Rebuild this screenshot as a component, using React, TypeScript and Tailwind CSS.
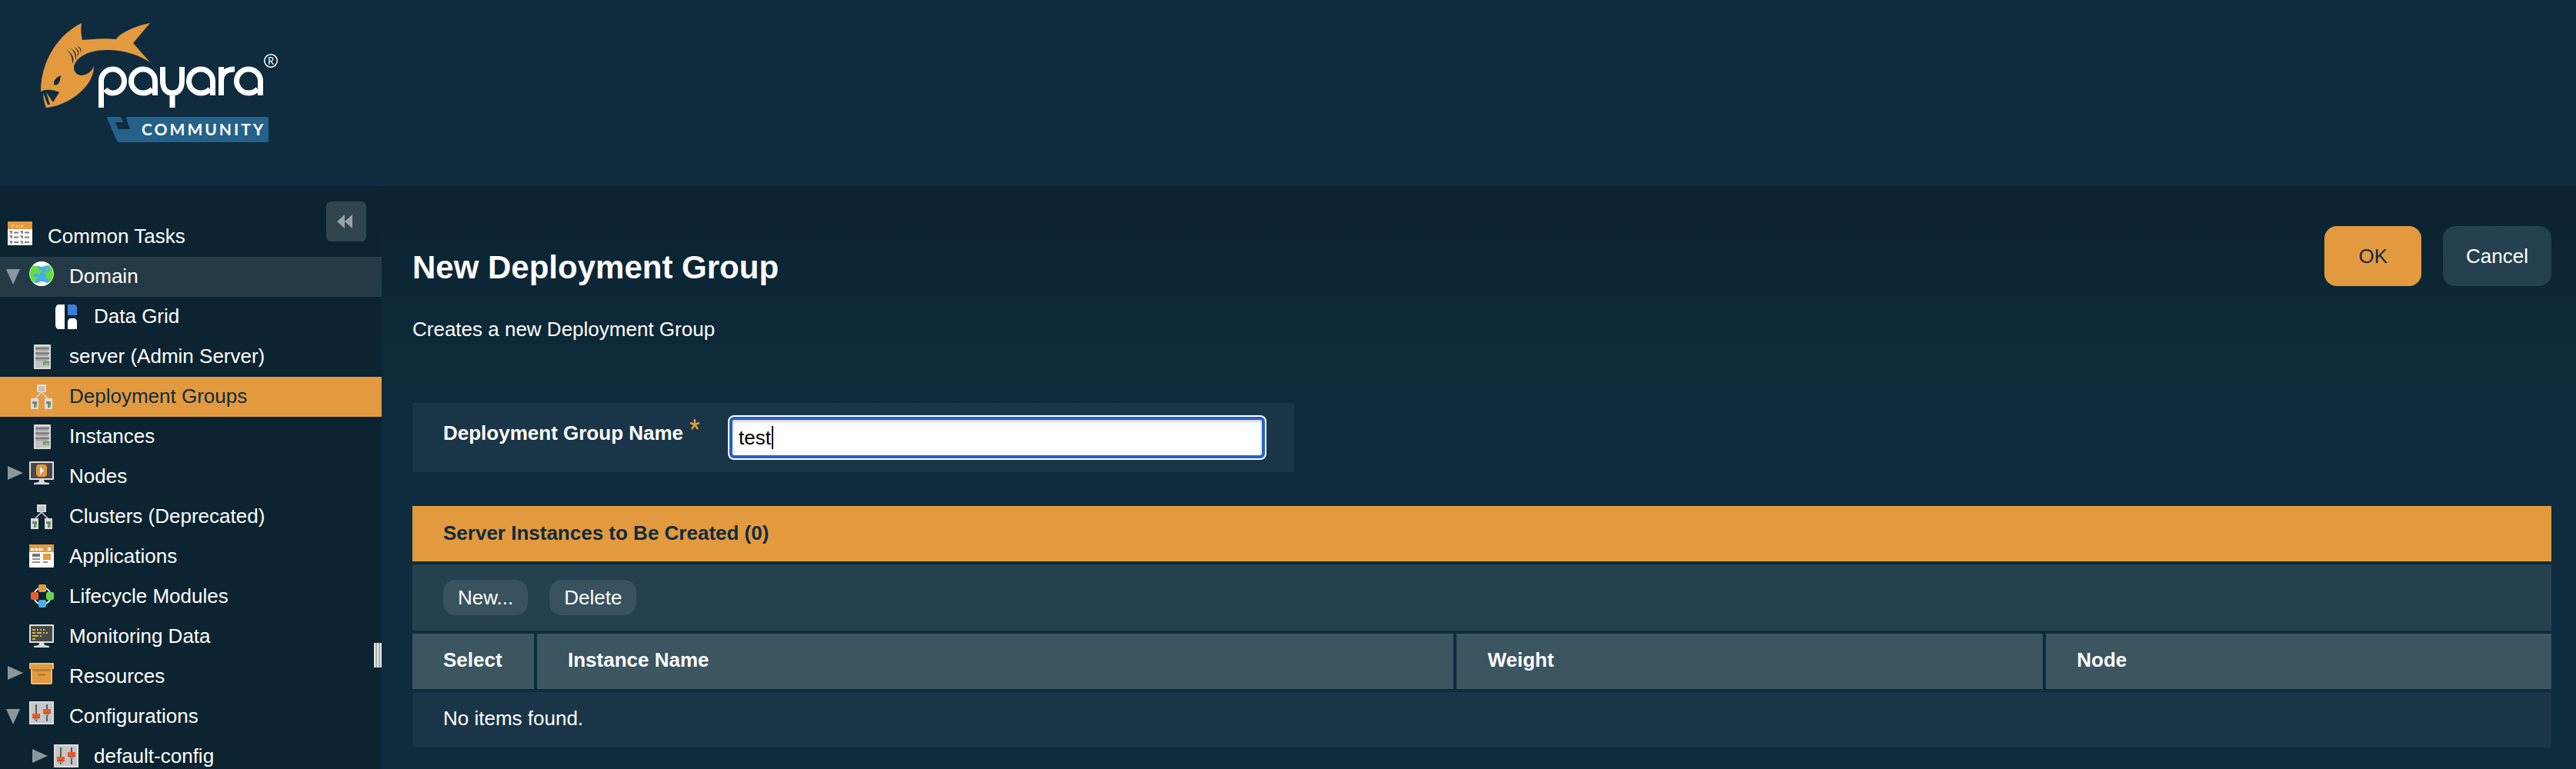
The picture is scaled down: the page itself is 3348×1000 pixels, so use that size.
import { useState, type ReactNode } from "react";

const GRAY = "#8a979e";

function TasksIcon() {
  return (
    <svg width="32" height="32" viewBox="0 0 32 32" aria-hidden="true">
      <rect width="32" height="31" rx="2" fill="#fff" />
      <path d="M2 0H30Q32 0 32 2V10H0V2Q0 0 2 0Z" fill="#e39a3f" />
      <path d="M6 8V5H9M12 8V5M15 5V7M18 5H20M19 5L18 8" stroke="#f1cb9c" strokeWidth="1.500" fill="none" />
      <path d="M2 12H6V16H4ZM16 12H20V16H18ZM2 18H6V22H4ZM16 18H20V22H18ZM2 25H6V29H4ZM16 25H20V29H18Z" fill="#8d8d8d" />
      <path d="M8 14.500H14M22 14.500H28M8 20.500H14M22 20.500H28M8 27H14M22 27H28" stroke="#7b7b7b" strokeWidth="2" />
      <path d="M0 30.500H32" stroke="#d5d5d5" />
    </svg>
  );
}

function GlobeIcon() {
  return (
    <svg width="32" height="32" viewBox="0 0 32 32" aria-hidden="true">
      <clipPath id="globe"><circle cx="16" cy="16" r="16" /></clipPath>
      <g clipPath="url(#globe)">
        <rect width="32" height="32" fill="#66dd3f" />
        <path d="M7 4H26L25 8L21 12L20 15L22 17V21L25 24L26 28H6L10 22L13 20H6L4 18L10 15L13 17L16 12L12 9Z" fill="#4aaee2" />
        <circle cx="23" cy="10" r="2.500" fill="#66dd3f" stroke="#4aaee2" strokeWidth="2" />
        <path d="M5 5L8 0H24L27 5L23 5L20 6L16 7L12 6L8 6ZM5 27L8 32H25L27 27L23 28L18 26H14L10 28Z" fill="#fff" />
        <circle cx="16" cy="16" r="15.500" fill="none" stroke="#fff" strokeOpacity=".6" />
      </g>
    </svg>
  );
}

function GridIcon() {
  return (
    <svg width="32" height="32" viewBox="0 0 32 32" aria-hidden="true">
      <path d="M5 0H14V32H5Q2 30 2 27V5Q2 2 5 0Z" fill="#fff" />
      <path d="M18 0H27Q30 1 30 4V14H18Z" fill="#3f7ddb" />
      <path d="M18 32V22Q19 18 22 18H26Q29 18 30 22V32Z" fill="#fff" />
    </svg>
  );
}

function ServerIcon() {
  return (
    <svg width="32" height="32" viewBox="0 0 32 32" aria-hidden="true">
      <rect x="6" width="22" height="32" rx="1" fill="#dcdcdc" />
      <rect x="8" y="2" width="18" height="28" fill="#c2c2c2" />
      <path d="M8 5H26M8 11.500H26M8 18H26" stroke="#777" strokeWidth="2.500" />
      <path d="M9 7.500H24M9 14H24M9 20.500H24" stroke="#a2a2a2" strokeWidth="1.500" />
      <rect x="18" y="22" width="8" height="5" fill="#808080" />
      <rect x="20" y="24" width="5" height="3" fill="#66d944" />
    </svg>
  );
}

function ClusterIcon() {
  return (
    <svg width="32" height="32" viewBox="0 0 32 32" aria-hidden="true">
      <path d="M16 10L7 19M16 10L25 19" stroke="#d5d5d5" strokeWidth="1.500" />
      <rect x="10" width="12" height="10" fill="#dedede" />
      <rect x="12" y="2" width="8" height="6" fill="#c6c6c6" />
      <path d="M12 8H20" stroke="#b0b0b0" />
      <path d="M2 18H12V32H2ZM20 18H30V32H20Z" fill="#dadada" />
      <path d="M4 22H10V30H6V25H4ZM22 22H28V30H24V25H22Z" fill="#7d7d7d" />
      <path d="M8 26H10V30H8ZM26 26H28V30H26Z" fill="#5fd33f" />
    </svg>
  );
}

function MonitorFrame({ children }: { children: ReactNode }) {
  return (
    <svg width="32" height="32" viewBox="0 0 32 32" aria-hidden="true">
      <path d="M13 24H19L20 27L26 28V30H6V28L12 27Z" fill="#dadada" />
      <rect width="32" height="24" rx="1" fill="#dedede" />
      <rect x="2" y="2" width="28" height="20" fill="#494949" />
      {children}
    </svg>
  );
}

function NodesIcon() {
  return (
    <MonitorFrame>
      <rect x="9" y="4" width="14" height="16" rx="4" fill="#e39a3f" />
      <path d="M14 7L19 12L14 17Z" fill="#fff" />
    </MonitorFrame>
  );
}

function MonitoringIcon() {
  return (
    <MonitorFrame>
      <path d="M4 7H8M10 7H12M14 7H16M18 7H20M4 11H8M10 11H16M18 11H20M22 11H24M4 15H12M14 15H16M4 19H8" stroke="#c9b943" strokeWidth="2" />
    </MonitorFrame>
  );
}

function ApplicationsIcon() {
  return (
    <svg width="32" height="32" viewBox="0 0 32 32" aria-hidden="true">
      <rect width="32" height="30" rx="1" fill="#fff" />
      <path d="M0 1Q0 0 1 0H31Q32 0 32 1V10H0Z" fill="#e39a3f" />
      <path d="M2 6.500H18" stroke="#fff" strokeWidth="3" strokeDasharray="4 1" />
      <rect x="24" y="4" width="4" height="4" fill="#fff" />
      <rect x="4" y="12" width="10" height="4" fill="#747474" />
      <path d="M4 19H14M4 23H14M18 23H24" stroke="#8e8e8e" strokeWidth="2" />
      <rect x="18" y="12" width="10" height="8" fill="#e39a3f" />
    </svg>
  );
}

function LifecycleIcon() {
  return (
    <svg width="32" height="32" viewBox="0 0 32 32" aria-hidden="true">
      <circle cx="17" cy="15" r="11" fill="none" stroke="#d8d8d8" strokeWidth="2" />
      <rect x="12" y="0" width="10" height="10" rx="2" fill="#e39a3f" />
      <rect x="22" y="10" width="10" height="10" rx="2" fill="#66d944" />
      <rect x="12" y="20" width="10" height="10" rx="2" fill="#4aaee2" />
      <rect x="2" y="10" width="10" height="10" rx="2" fill="#e95b2c" />
    </svg>
  );
}

function BoxIcon() {
  return (
    <svg width="32" height="32" viewBox="0 -2 32 32" aria-hidden="true">
      <path d="M2 6H30V26Q30 28 28 28H4Q2 28 2 26Z" fill="#f0b96f" />
      <path d="M4 6H28V26H4Z" fill="#e39a3f" />
      <rect width="32" height="8" rx="1" fill="#f0b96f" />
      <rect x="2" y="2" width="28" height="6" fill="#e39a3f" />
      <path d="M4 9.500H28" stroke="#bd7d2f" strokeWidth="3" />
      <path d="M12 15.500H20" stroke="#a87030" strokeWidth="2" strokeLinecap="round" />
    </svg>
  );
}

function SlidersIcon() {
  return (
    <svg width="32" height="32" viewBox="0 0 32 32" aria-hidden="true">
      <rect width="32" height="30" fill="#dedede" />
      <rect x="2" y="2" width="28" height="26" fill="#c6c6c6" />
      <path d="M9 4V26M23 4V26" stroke="#5c5c5c" strokeWidth="2" />
      <path d="M6 23H12M20 17H26" stroke="#9c9c9c" strokeWidth="2" />
      <rect x="4" y="16" width="10" height="6" fill="#e95b2c" />
      <rect x="18" y="10" width="10" height="6" fill="#e95b2c" />
      <path d="M4 21.500H14M18 15.500H28" stroke="#b8431b" />
    </svg>
  );
}

function Logo() {
  return (
    <svg width="320" height="168" viewBox="50 28 320 168" role="img" aria-label="Payara Community">
      <path d="M106 30C77 44 53 78 53 119C59 116 68 116 77 120L69 133L60 120L65 136L62 136L56 121C56 128 58 135 60 140C83 139 122 116 122 86C119 94 112 98 105 98C99 97 96 93 96 88C97 76 113 65 139 65C163 65 181 72 195 81L173 56L195 30C174 34 155 44 151 51C135 49 120 51 107 52C105 44 105 37 106 30Z" fill="#e39a3f" />
      <path d="M79 98C72 101 69 106 70 110C74 112 78 109 79 98ZM84 64C92 68 94 74 94 83C98 77 94 68 84 64ZM90 62C97 66 98 71 98 78C101 72 98 65 90 62ZM95 61C101 64 102 68 101 74C104 68 102 63 95 61ZM100 60C105 63 105 66 104 69C107 65 105 61 100 60Z" fill="#0e2c3e" />
      <g fill="none" stroke="#fff" strokeWidth="7">
        <path d="M131.500 140V106A15 15.500 0 1 1 146.500 121C142 121 139 119 137 116" />
        <path d="M201.500 124V106A15.500 15.500 0 1 0 186 121C191 121 195 119 198 116" />
        <path d="M211.500 87V105C211.500 115 216 121 224 121S236.500 115 236.500 105V87M224 121V140" />
        <path d="M276.500 124V106A15.500 15.500 0 1 0 261 121C266 121 270 119 273 116" />
        <path d="M287.500 124V105C287.500 95 294 90 305 90M287.500 124V87" />
        <path d="M338.500 124V106A15.500 15.500 0 1 0 323 121C328 121 332 119 335 116" />
      </g>
      <circle cx="352" cy="79" r="8.300" fill="none" stroke="#fff" strokeWidth="1.500" />
      <text x="352" y="84" textAnchor="middle" fill="#fff" fontSize="13" fontFamily="Lato, sans-serif">R</text>
      <path d="M140 152H156Q157 152 158 154L160 159H150L154 168H169L164 154Q164 152 166 152H346Q349 152 349 154V183Q349 185 347 185H155Q153 185 152 183L139 154Q139 152 140 152Z" fill="#256188" />
      <text x="184" y="176" fill="#fff" fontSize="21" fontWeight="700" fontFamily="Lato, sans-serif" className="tracking-[3px]">COMMUNITY</text>
    </svg>
  );
}

type Arrow = "open" | "closed";

interface Item {
  label: string;
  icon: ReactNode;
  arrow?: Arrow;
  level: 0 | 1 | 2;
  state?: "hover" | "selected";
}

const items: Item[] = [
  { label: "Common Tasks", icon: <TasksIcon />, level: 0 },
  { label: "Domain", icon: <GlobeIcon />, level: 1, arrow: "open", state: "hover" },
  { label: "Data Grid", icon: <GridIcon />, level: 2 },
  { label: "server (Admin Server)", icon: <ServerIcon />, level: 1 },
  { label: "Deployment Groups", icon: <ClusterIcon />, level: 1, state: "selected" },
  { label: "Instances", icon: <ServerIcon />, level: 1 },
  { label: "Nodes", icon: <NodesIcon />, level: 1, arrow: "closed" },
  { label: "Clusters (Deprecated)", icon: <ClusterIcon />, level: 1 },
  { label: "Applications", icon: <ApplicationsIcon />, level: 1 },
  { label: "Lifecycle Modules", icon: <LifecycleIcon />, level: 1 },
  { label: "Monitoring Data", icon: <MonitoringIcon />, level: 1 },
  { label: "Resources", icon: <BoxIcon />, level: 1, arrow: "closed" },
  { label: "Configurations", icon: <SlidersIcon />, level: 1, arrow: "open" },
  { label: "default-config", icon: <SlidersIcon />, level: 2, arrow: "closed" },
];

function ToggleArrow({ arrow }: { arrow: Arrow }) {
  return (
    <button type="button" aria-label={arrow === "open" ? "Collapse" : "Expand"} className="block">
      <svg width="22" height="22" viewBox="0 0 22 22" aria-hidden="true">
        <path d={arrow === "open" ? "M0 1H18L9 21Z" : "M2 1L22 10L2 19Z"} fill={GRAY} />
      </svg>
    </button>
  );
}

const indent = { 0: "pl-[10px]", 1: "pl-2", 2: "pl-10" };
const rowState = {
  none: "text-white",
  hover: "bg-[#253a47] text-white",
  selected: "bg-[#e39a3f] text-[#0e2c3e]",
};

function TreeRow({ item }: { item: Item }) {
  const raised = item.level === 0 || (item.level === 1 && item.arrow);
  const arrowPad = item.level === 1 && item.arrow === "closed" ? "pt-[11px]" : "pt-[15px]";
  return (
    <li className={`flex h-[52px] items-start ${indent[item.level]} ${rowState[item.state ?? "none"]}`}>
      {item.level > 0 && (
        <span className={`w-[30px] shrink-0 ${arrowPad}`}>{item.arrow && <ToggleArrow arrow={item.arrow} />}</span>
      )}
      <span className={`w-8 shrink-0 ${raised ? "pt-[6px]" : "pt-[10px]"}`}>{item.icon}</span>
      <a href="#" className="pl-5 leading-[50px] whitespace-nowrap">{item.label}</a>
    </li>
  );
}

function ColumnHeader({ children, last = false }: { children: ReactNode; last?: boolean }) {
  return (
    <th scope="col" className={`h-[72px] bg-[#3b5561] pt-[18px] pl-10 align-top font-bold ${last ? "" : "border-r-4 border-[#0e2c3e]"}`}>
      {children}
    </th>
  );
}

function SmallButton({ children }: { children: ReactNode }) {
  return (
    <button type="button" className="h-[46px] rounded-2xl bg-[#38535f] px-[19px]">{children}</button>
  );
}

export default function App() {
  const [name, setName] = useState("test");
  return (
    <div className="flex h-screen flex-col overflow-hidden bg-[#0e2c3e] font-['Liberation_Sans',Arial,sans-serif] text-[26px] leading-8 text-white">
      <header className="h-[242px] shrink-0 pt-7 pl-[50px]">
        <Logo />
      </header>
      <div className="flex min-h-0 flex-1">
        <nav aria-label="Tree" className="relative w-[496px] shrink-0 bg-[#0c2431] pt-10">
          <button type="button" aria-label="Collapse sidebar" className="absolute top-5 right-5 flex size-[52px] items-center justify-center rounded-md bg-[#304550] pr-1">
            <svg width="20" height="18" viewBox="0 0 20 18" aria-hidden="true">
              <path d="M10 0V18L0 9ZM20 0V18L10 9Z" fill="#98a2a8" />
            </svg>
          </button>
          <ul>
            {items.map((item) => <TreeRow key={item.label} item={item} />)}
          </ul>
          <div role="separator" className="absolute top-[594px] right-0 flex h-8 w-[10px] justify-evenly bg-[#e8e8e8]">
            <span className="w-[2px] bg-[#a8adb0]" />
            <span className="w-[2px] bg-[#a8adb0]" />
          </div>
        </nav>
        <main className="min-w-0 flex-1 bg-linear-to-b from-[#0c2330] to-[#0e2c3e] to-[300px] pt-[52px] pr-8 pl-10">
          <div className="flex items-start justify-between">
            <h1 className="pt-7 text-[42px] leading-[52px] font-bold">New Deployment Group</h1>
            <div className="flex gap-7">
              <button type="button" className="h-[78px] rounded-2xl bg-[#e39a3f] px-11 text-[#0e2c3e]">OK</button>
              <button type="button" className="h-[78px] rounded-2xl bg-[#25414f] px-[30px]">Cancel</button>
            </div>
          </div>
          <p className="mt-[38px]">Creates a new Deployment Group</p>
          <div className="mt-20 flex h-[90px] w-fit items-start bg-[#1a3547] px-10 pt-5">
            <label htmlFor="group-name" className="flex w-[374px] items-start gap-2 font-bold">
              <span className="pt-[3px]">Deployment Group Name</span>
              <svg width="14" height="16" viewBox="0 0 14 16" aria-hidden="true">
                <path d="M7 8V1M7 8L1 6M7 8L13 6M7 8L3 14M7 8L11 14" stroke="#e39a3f" strokeWidth="2.500" />
              </svg>
            </label>
            <div className="relative">
              <input
                id="group-name"
                value={name}
                onChange={(e) => setName(e.target.value)}
                className="block h-[50px] w-[692px] rounded-sm border-2 border-[#2362c8] bg-white px-2 text-black caret-transparent shadow-[inset_0_2px_4px_#ccc] ring-2 ring-[#2362c8] outline-2 outline-offset-2 outline-white"
              />
              {name === "test" && <span className="absolute top-[10px] left-[53px] h-[30px] w-[2px] bg-black" />}
            </div>
          </div>
          <table className="mt-11 w-full table-fixed border-separate border-spacing-0 text-left">
            <caption className="h-[76px] border-b-4 border-[#0e2c3e] bg-[#e39a3f] pt-[19px] pl-10 text-left font-bold text-[#0e2c3e]">
              Server Instances to Be Created (0)
            </caption>
            <colgroup>
              <col className="w-[162px]" />
              <col className="w-[43%]" />
              <col className="w-[27.55%]" />
              <col />
            </colgroup>
            <thead>
              <tr>
                <td colSpan={4} className="h-[90px] border-b-4 border-[#0e2c3e] bg-[#25414f] py-5 pl-10">
                  <div className="flex gap-7">
                    <SmallButton>New...</SmallButton>
                    <SmallButton>Delete</SmallButton>
                  </div>
                </td>
              </tr>
              <tr>
                <ColumnHeader>Select</ColumnHeader>
                <ColumnHeader>Instance Name</ColumnHeader>
                <ColumnHeader>Weight</ColumnHeader>
                <ColumnHeader last>Node</ColumnHeader>
              </tr>
            </thead>
            <tbody>
              <tr>
                <td colSpan={4} className="h-[76px] border-t-4 border-[#0e2c3e] bg-[#1a3547] pt-[18px] pl-10 align-top">
                  No items found.
                </td>
              </tr>
            </tbody>
          </table>
        </main>
      </div>
    </div>
  );
}
